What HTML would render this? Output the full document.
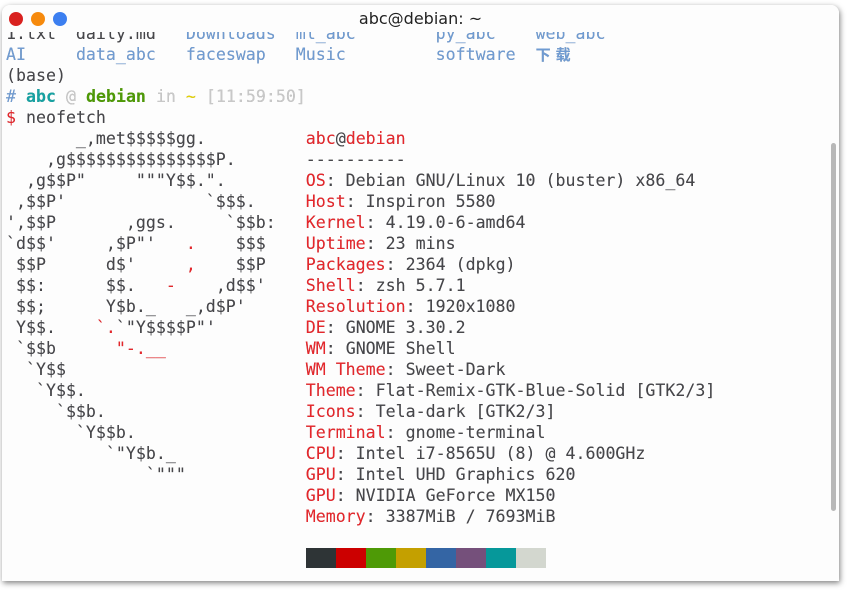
<!DOCTYPE html>
<html><head><meta charset="utf-8"><style>
html,body{margin:0;padding:0;width:848px;height:590px;background:#fff;overflow:hidden}
.win{position:absolute;left:2px;top:5px;width:837px;height:576px;background:#fdfdfd;border-radius:8px 8px 0 0;box-shadow:1px 2px 6px rgba(0,0,0,.5);overflow:hidden}
.tb{position:absolute;left:0;top:0;width:837px;height:27px;background:#fdfdfd;z-index:2}
.title{position:absolute;left:0;right:0;top:4px;text-align:center;font:16px "DejaVu Sans","Liberation Sans",sans-serif;color:#222}
.dot{position:absolute;top:7px;width:14px;height:14px;border-radius:50%}
pre{position:absolute;left:4px;top:18px;margin:0;font-family:"DejaVu Sans Mono","Liberation Mono","Noto Sans CJK SC",monospace;font-size:16.6px;line-height:21px;color:#46464a;letter-spacing:0;text-shadow:0 0 0.3px rgba(0,0,0,.4)}
.b{color:#6f9bd2}.r{color:#e6262b}.t{color:#17a2a2;font-weight:bold}.g{color:#4e9a06;font-weight:bold}.l{color:#c8c8c8}.y{color:#e5d200}
.cj{display:inline-block;width:20px;font-family:"Noto Sans CJK SC",sans-serif;font-weight:bold;font-size:15px}
.sb{position:absolute;left:829px;top:138px;width:5px;height:368px;background:#b8b8b8;border-radius:3px}
.cb{position:absolute;top:543px;width:30px;height:20px}
</style></head><body>
<div class="win">
<div class="tb"><div class="dot" style="left:7px;background:#d9211f"></div><div class="dot" style="left:29px;background:#f68a0d"></div><div class="dot" style="left:51px;background:#3c7ff0"></div><div class="title">abc@debian: ~</div></div>
<pre>1.txt  daily.md   <span class="b">Downloads</span>  <span class="b">ml_abc</span>        <span class="b">py_abc</span>    <span class="b">web_abc</span>
<span class="b">AI</span>     <span class="b">data_abc</span>   <span class="b">faceswap</span>   <span class="b">Music</span>         <span class="b">software</span>  <span class="b"><span class="cj">下</span><span class="cj">载</span></span>
(base)
<span class="b">#</span> <span class="t">abc</span> <span class="l">@</span> <span class="g">debian</span> <span class="l">in</span> <span class="y">~</span> <span class="l">[11:59:50]</span>
<span class="r">$</span> neofetch
       _,met$$$$$gg.          <span class="r">abc</span>@<span class="r">debian</span>
    ,g$$$$$$$$$$$$$$$P.       ----------
  ,g$$P"     """Y$$.".        <span class="r">OS</span>: Debian GNU/Linux 10 (buster) x86_64
 ,$$P'              `$$$.     <span class="r">Host</span>: Inspiron 5580
',$$P       ,ggs.     `$$b:   <span class="r">Kernel</span>: 4.19.0-6-amd64
`d$$'     ,$P"'   <span class="r">.</span>    $$$    <span class="r">Uptime</span>: 23 mins
 $$P      d$'     <span class="r">,</span>    $$P    <span class="r">Packages</span>: 2364 (dpkg)
 $$:      $$.   <span class="r">-</span>    ,d$$'    <span class="r">Shell</span>: zsh 5.7.1
 $$;      Y$b._   _,d$P'      <span class="r">Resolution</span>: 1920x1080
 Y$$.    <span class="r">`.</span>`"Y$$$$P"'         <span class="r">DE</span>: GNOME 3.30.2
 `$$b      <span class="r">"-.__</span>              <span class="r">WM</span>: GNOME Shell
  `Y$$                        <span class="r">WM Theme</span>: Sweet-Dark
   `Y$$.                      <span class="r">Theme</span>: Flat-Remix-GTK-Blue-Solid [GTK2/3]
     `$$b.                    <span class="r">Icons</span>: Tela-dark [GTK2/3]
       `Y$$b.                 <span class="r">Terminal</span>: gnome-terminal
          `"Y$b._             <span class="r">CPU</span>: Intel i7-8565U (8) @ 4.600GHz
              `"""            <span class="r">GPU</span>: Intel UHD Graphics 620
                              <span class="r">GPU</span>: NVIDIA GeForce MX150
                              <span class="r">Memory</span>: 3387MiB / 7693MiB</pre>
<div class="sb"></div>
<div class="cb" style="left:304px;background:#2e3436"></div>
<div class="cb" style="left:334px;background:#cc0000"></div>
<div class="cb" style="left:364px;background:#4e9a06"></div>
<div class="cb" style="left:394px;background:#c4a000"></div>
<div class="cb" style="left:424px;background:#3465a4"></div>
<div class="cb" style="left:454px;background:#75507b"></div>
<div class="cb" style="left:484px;background:#06989a"></div>
<div class="cb" style="left:514px;background:#d3d7cf"></div>
</div>
</body></html>
